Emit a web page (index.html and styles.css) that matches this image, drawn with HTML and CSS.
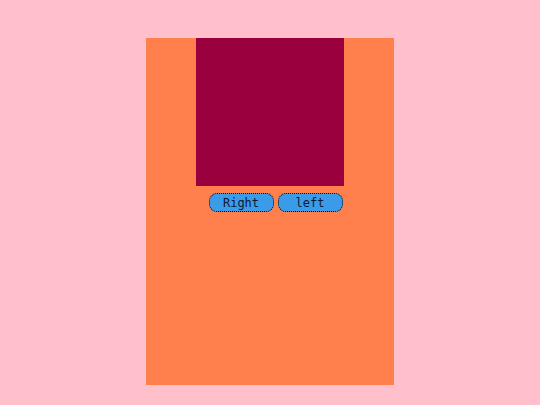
FILE: index.html
```html
<!DOCTYPE html>
<html>
<head>
    <title>Slider</title>
    <link rel="stylesheet" href="styles.css">
</head>
<body>
    <div class="frame">
        <div class="slide"></div>
        <div class="controls">
            <button class="nav-button">Right</button>
            <button class="nav-button">left</button>
        </div>
    </div>
</body>
</html>
```
FILE: styles.css
```css
body {
    background: #ffc0cb;
    margin: 0;
    height: 405px;
    display: flex;
    justify-content: center;
    font-family: 'DejaVu Sans Mono', monospace;
}
.frame {
    margin-top: 38px;
    width: 248px;
    height: 347px;
    background: #ff7f4d;
    display: flex;
    flex-direction: column;
    align-items: center;
}
.slide {
    width: 148px;
    height: 148px;
    background: #99003d;
}
.controls {
    display: flex;
    gap: 4px;
    margin-top: 7px;
    padding-left: 11px;
}
.nav-button {
    width: 65px;
    height: 19px;
    padding: 0;
    font-family: 'DejaVu Sans Mono', monospace;
    font-size: 12px;
    color: #0d1a33;
    background: #3a9be9;
    border: 1px dotted #000;
    border-radius: 8px;
}
```
